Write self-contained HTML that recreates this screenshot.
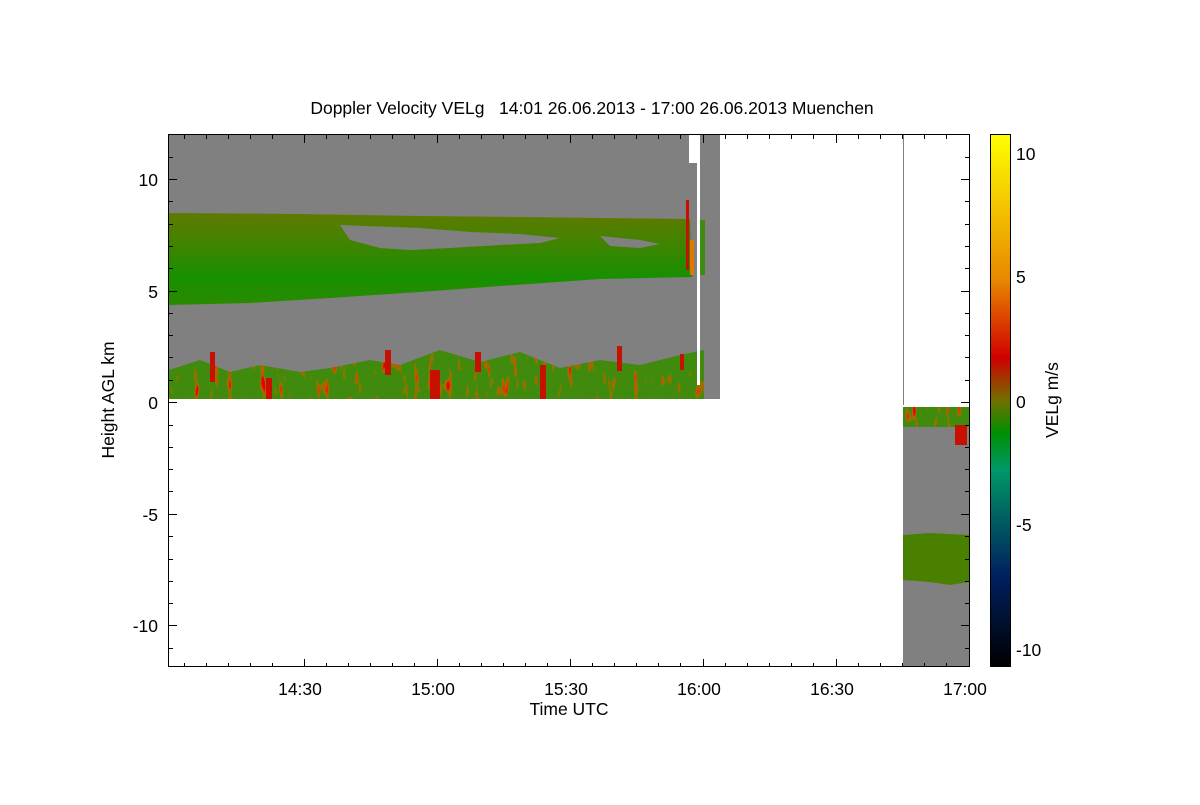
<!DOCTYPE html>
<html><head><meta charset="utf-8"><style>
body{margin:0;background:#fff;width:1200px;height:800px;overflow:hidden}
svg text{font-family:"Liberation Sans",sans-serif;font-size:17.5px;fill:#000}
</style></head><body>
<svg width="1200" height="800" viewBox="0 0 1200 800">
<defs>
<linearGradient id="cb" x1="0" y1="0" x2="0" y2="1">
<stop offset="0" stop-color="#ffff00"/>
<stop offset="0.27" stop-color="#e88a00"/>
<stop offset="0.42" stop-color="#d00000"/>
<stop offset="0.5" stop-color="#707000"/>
<stop offset="0.56" stop-color="#009000"/>
<stop offset="0.63" stop-color="#009868"/>
<stop offset="0.72" stop-color="#006060"/>
<stop offset="0.83" stop-color="#002060"/>
<stop offset="1" stop-color="#000000"/>
</linearGradient>
<linearGradient id="band" x1="0" y1="0" x2="0" y2="1">
<stop offset="0" stop-color="#5f7a00"/>
<stop offset="0.35" stop-color="#3f8400"/>
<stop offset="0.7" stop-color="#179000"/>
<stop offset="1" stop-color="#2a8a00"/>
</linearGradient>
<filter id="nz" x="0" y="0" width="1" height="1">
<feTurbulence type="fractalNoise" baseFrequency="0.15 0.04" numOctaves="2" seed="3" result="t"/>
<feColorMatrix in="t" type="matrix" values="0 0 0 0 0.8  0 0 0 0 0  0 0 0 0 0  0 0 0 5 -3.0" result="r"/>
<feComposite in="r" in2="SourceGraphic" operator="in" result="rr"/>
<feMerge><feMergeNode in="SourceGraphic"/><feMergeNode in="rr"/></feMerge>
</filter>
</defs>
<text x="592" y="114" text-anchor="middle" xml:space="preserve">Doppler Velocity VELg   14:01 26.06.2013 - 17:00 26.06.2013 Muenchen</text>
<rect x="169" y="135" width="551" height="264" fill="#808080"/>
<polygon points="169,213 300,214 420,216 520,217 600,218 690,219 692,277 600,279 500,286 420,292 330,298 250,303 169,305" fill="url(#band)"/>
<polygon points="340,225 420,228 470,232 520,234 560,238 540,243 500,245 450,248 410,250 380,248 350,240" fill="#808080"/>
<polygon points="600,236 640,240 660,244 640,248 610,246" fill="#808080"/>
<polygon points="169,370 200,360 230,372 260,365 300,372 330,368 370,360 400,365 440,350 480,362 520,352 560,368 600,360 640,365 680,355 704,350 704,399 169,399" fill="#3f8a10" filter="url(#nz)"/>
<g fill="#c81000">
<rect x="210" y="352" width="5" height="30"/><rect x="385" y="350" width="6" height="25"/>
<rect x="430" y="370" width="10" height="29"/><rect x="540" y="365" width="6" height="34"/>
<rect x="617" y="346" width="5" height="25"/><rect x="475" y="352" width="6" height="20"/>
<rect x="266" y="378" width="6" height="21"/><rect x="680" y="354" width="4" height="16"/>
</g>
<rect x="689" y="135" width="8" height="28" fill="#fff"/>
<rect x="697" y="135" width="3" height="250" fill="#fff"/>
<rect x="686" y="200" width="3" height="70" fill="#c81000"/>
<rect x="690" y="240" width="4" height="35" fill="#e07800"/>
<rect x="700" y="220" width="5" height="55" fill="#3f8a10"/>
<rect x="903" y="135" width="1" height="270" fill="#808080"/>
<rect x="903" y="407" width="66" height="260" fill="#808080"/>
<rect x="903" y="407" width="66" height="20" fill="#3f8a10" filter="url(#nz)"/>
<rect x="955" y="425" width="12" height="20" fill="#c81000"/>
<polygon points="903,535 930,533 969,535 969,582 950,585 930,582 903,580" fill="#4a8000"/>
<rect x="168.5" y="134.5" width="801" height="532" fill="none" stroke="#000"/>
<g stroke="#000" stroke-width="1">
<path d="M169 179.5h8M169 291.5h8M169 402.5h8M169 514.5h8M169 625.5h8M961 179.5h8M961 291.5h8M961 402.5h8M961 514.5h8M961 625.5h8"/>
<path d="M169 157.5h4M169 201.5h4M169 224.5h4M169 246.5h4M169 268.5h4M169 313.5h4M169 335.5h4M169 357.5h4M169 380.5h4M169 425.5h4M169 447.5h4M169 469.5h4M169 491.5h4M169 536.5h4M169 559.5h4M169 581.5h4M169 603.5h4M169 648.5h4"/>
<path d="M965 157.5h4M965 201.5h4M965 224.5h4M965 246.5h4M965 268.5h4M965 313.5h4M965 335.5h4M965 357.5h4M965 380.5h4M965 425.5h4M965 447.5h4M965 469.5h4M965 491.5h4M965 536.5h4M965 559.5h4M965 581.5h4M965 603.5h4M965 648.5h4"/>
<path d="M304.5 135v8M437.5 135v8M570.5 135v8M703.5 135v8M836.5 135v8M304.5 667v-8M437.5 667v-8M570.5 667v-8M703.5 667v-8M836.5 667v-8"/>
<path d="M184.5 135v4M206.5 135v4M228.5 135v4M250.5 135v4M272.5 135v4M326.5 135v4M348.5 135v4M370.5 135v4M392.5 135v4M414.5 135v4M459.5 135v4M481.5 135v4M503.5 135v4M525.5 135v4M547.5 135v4M592.5 135v4M614.5 135v4M636.5 135v4M658.5 135v4M680.5 135v4M725.5 135v4M747.5 135v4M769.5 135v4M791.5 135v4M813.5 135v4M858.5 135v4M880.5 135v4M902.5 135v4M924.5 135v4M946.5 135v4"/>
<path d="M184.5 667v-4M206.5 667v-4M228.5 667v-4M250.5 667v-4M272.5 667v-4M326.5 667v-4M348.5 667v-4M370.5 667v-4M392.5 667v-4M414.5 667v-4M459.5 667v-4M481.5 667v-4M503.5 667v-4M525.5 667v-4M547.5 667v-4M592.5 667v-4M614.5 667v-4M636.5 667v-4M658.5 667v-4M680.5 667v-4M725.5 667v-4M747.5 667v-4M769.5 667v-4M791.5 667v-4M813.5 667v-4M858.5 667v-4M880.5 667v-4M902.5 667v-4M924.5 667v-4M946.5 667v-4"/>
</g>
<g text-anchor="end">
<text x="158" y="186">10</text><text x="158" y="298">5</text><text x="158" y="409">0</text><text x="158" y="521">-5</text><text x="158" y="632">-10</text>
</g>
<g text-anchor="middle">
<text x="300" y="695">14:30</text><text x="433" y="695">15:00</text><text x="566" y="695">15:30</text><text x="699" y="695">16:00</text><text x="832" y="695">16:30</text><text x="965" y="695">17:00</text>
<text x="569" y="715">Time UTC</text>
<text transform="translate(114,400) rotate(-90)">Height AGL km</text>
<text transform="translate(1058,400) rotate(-90)">VELg m/s</text>
</g>
<rect x="990.5" y="134.5" width="20" height="532" fill="url(#cb)" stroke="#000"/>
<g>
<text x="1016" y="160">10</text><text x="1016" y="283">5</text><text x="1016" y="408">0</text><text x="1016" y="531">-5</text><text x="1016" y="656">-10</text>
</g>
</svg>
</body></html>
